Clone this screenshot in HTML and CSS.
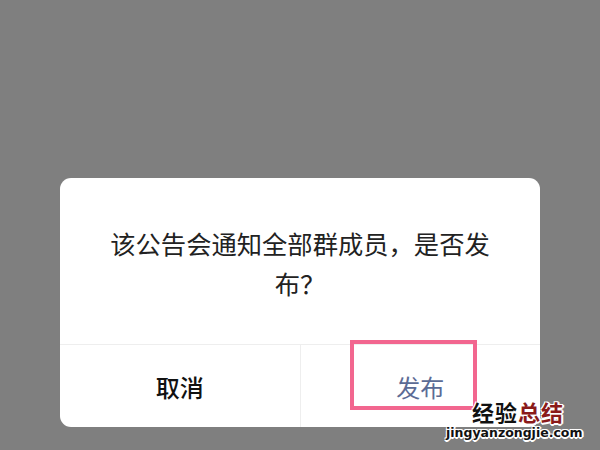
FILE: index.html
```html
<!DOCTYPE html>
<html lang="zh-CN">
<head>
    <meta charset="UTF-8">
    <meta name="viewport" content="width=device-width, initial-scale=1.0">
    <title>发布公告</title>
    <link rel="stylesheet" href="styles.css">
</head>
<body>
    <div class="dialog">
        <p class="message">该公告会通知全部群成员，是否发布？</p>
        <div class="actions">
            <button class="btn cancel-btn">取消</button>
            <button class="btn publish-btn">发布</button>
        </div>
    </div>

    <!-- highlight box from the screenshot -->
    <div class="highlight"></div>

    <div class="watermark">
        <div class="wm-title"><span class="wm-dark">经验</span><span class="wm-red">总结</span></div>
        <div class="wm-url">jingyanzongjie.com</div>
    </div>
</body>
</html>
```

FILE: styles.css
```css
html, body {
    margin: 0;
    height: 100%;
}
body {
    background-color: #7f7f7f;
    font-family: "Noto Sans CJK SC", "Noto Sans", sans-serif;
    overflow: hidden;
    padding-top: 178px;
    box-sizing: border-box;
}
.dialog {
    width: 480px;
    margin-left: 60px;
    background-color: #fff;
    border-radius: 11px;
    overflow: hidden;
}
.message {
    margin: 0;
    padding: 45px 44px 41px;
    font-size: 25.3px;
    line-height: 40px;
    color: #222;
    text-align: center;
}
.actions {
    display: flex;
    border-top: 1px solid #eeeeee;
}
.btn {
    flex: 1;
    height: 82px;
    border: none;
    background: none;
    font-family: inherit;
    font-size: 24px;
    padding: 0;
}
.cancel-btn {
    color: #111;
    font-weight: 500;
    border-right: 1px solid #eeeeee;
}
.publish-btn {
    color: #5b6b95;
}
.highlight {
    position: absolute;
    left: 350px;
    top: 340px;
    width: 119px;
    height: 62px;
    border: 4px solid #f2668f;
}
.watermark {
    position: absolute;
    left: 446px;
    top: 399px;
    width: 146px;
    text-shadow: 1px 1px 0 #fff, -1px -1px 0 #fff, 1px -1px 0 #fff, -1px 1px 0 #fff, 0 2px 0 #fff, 2px 0 0 #fff;
}
.wm-title {
    font-size: 22px;
    line-height: 25px;
    font-weight: 700;
    letter-spacing: 1px;
    padding-left: 26px;
}
.wm-dark {
    color: #111;
}
.wm-red {
    color: #8a1a1a;
}
.wm-url {
    font-family: "DejaVu Sans", sans-serif;
    font-size: 12.5px;
    line-height: 18px;
    color: #111;
    font-weight: 700;
    white-space: nowrap;
}
```
